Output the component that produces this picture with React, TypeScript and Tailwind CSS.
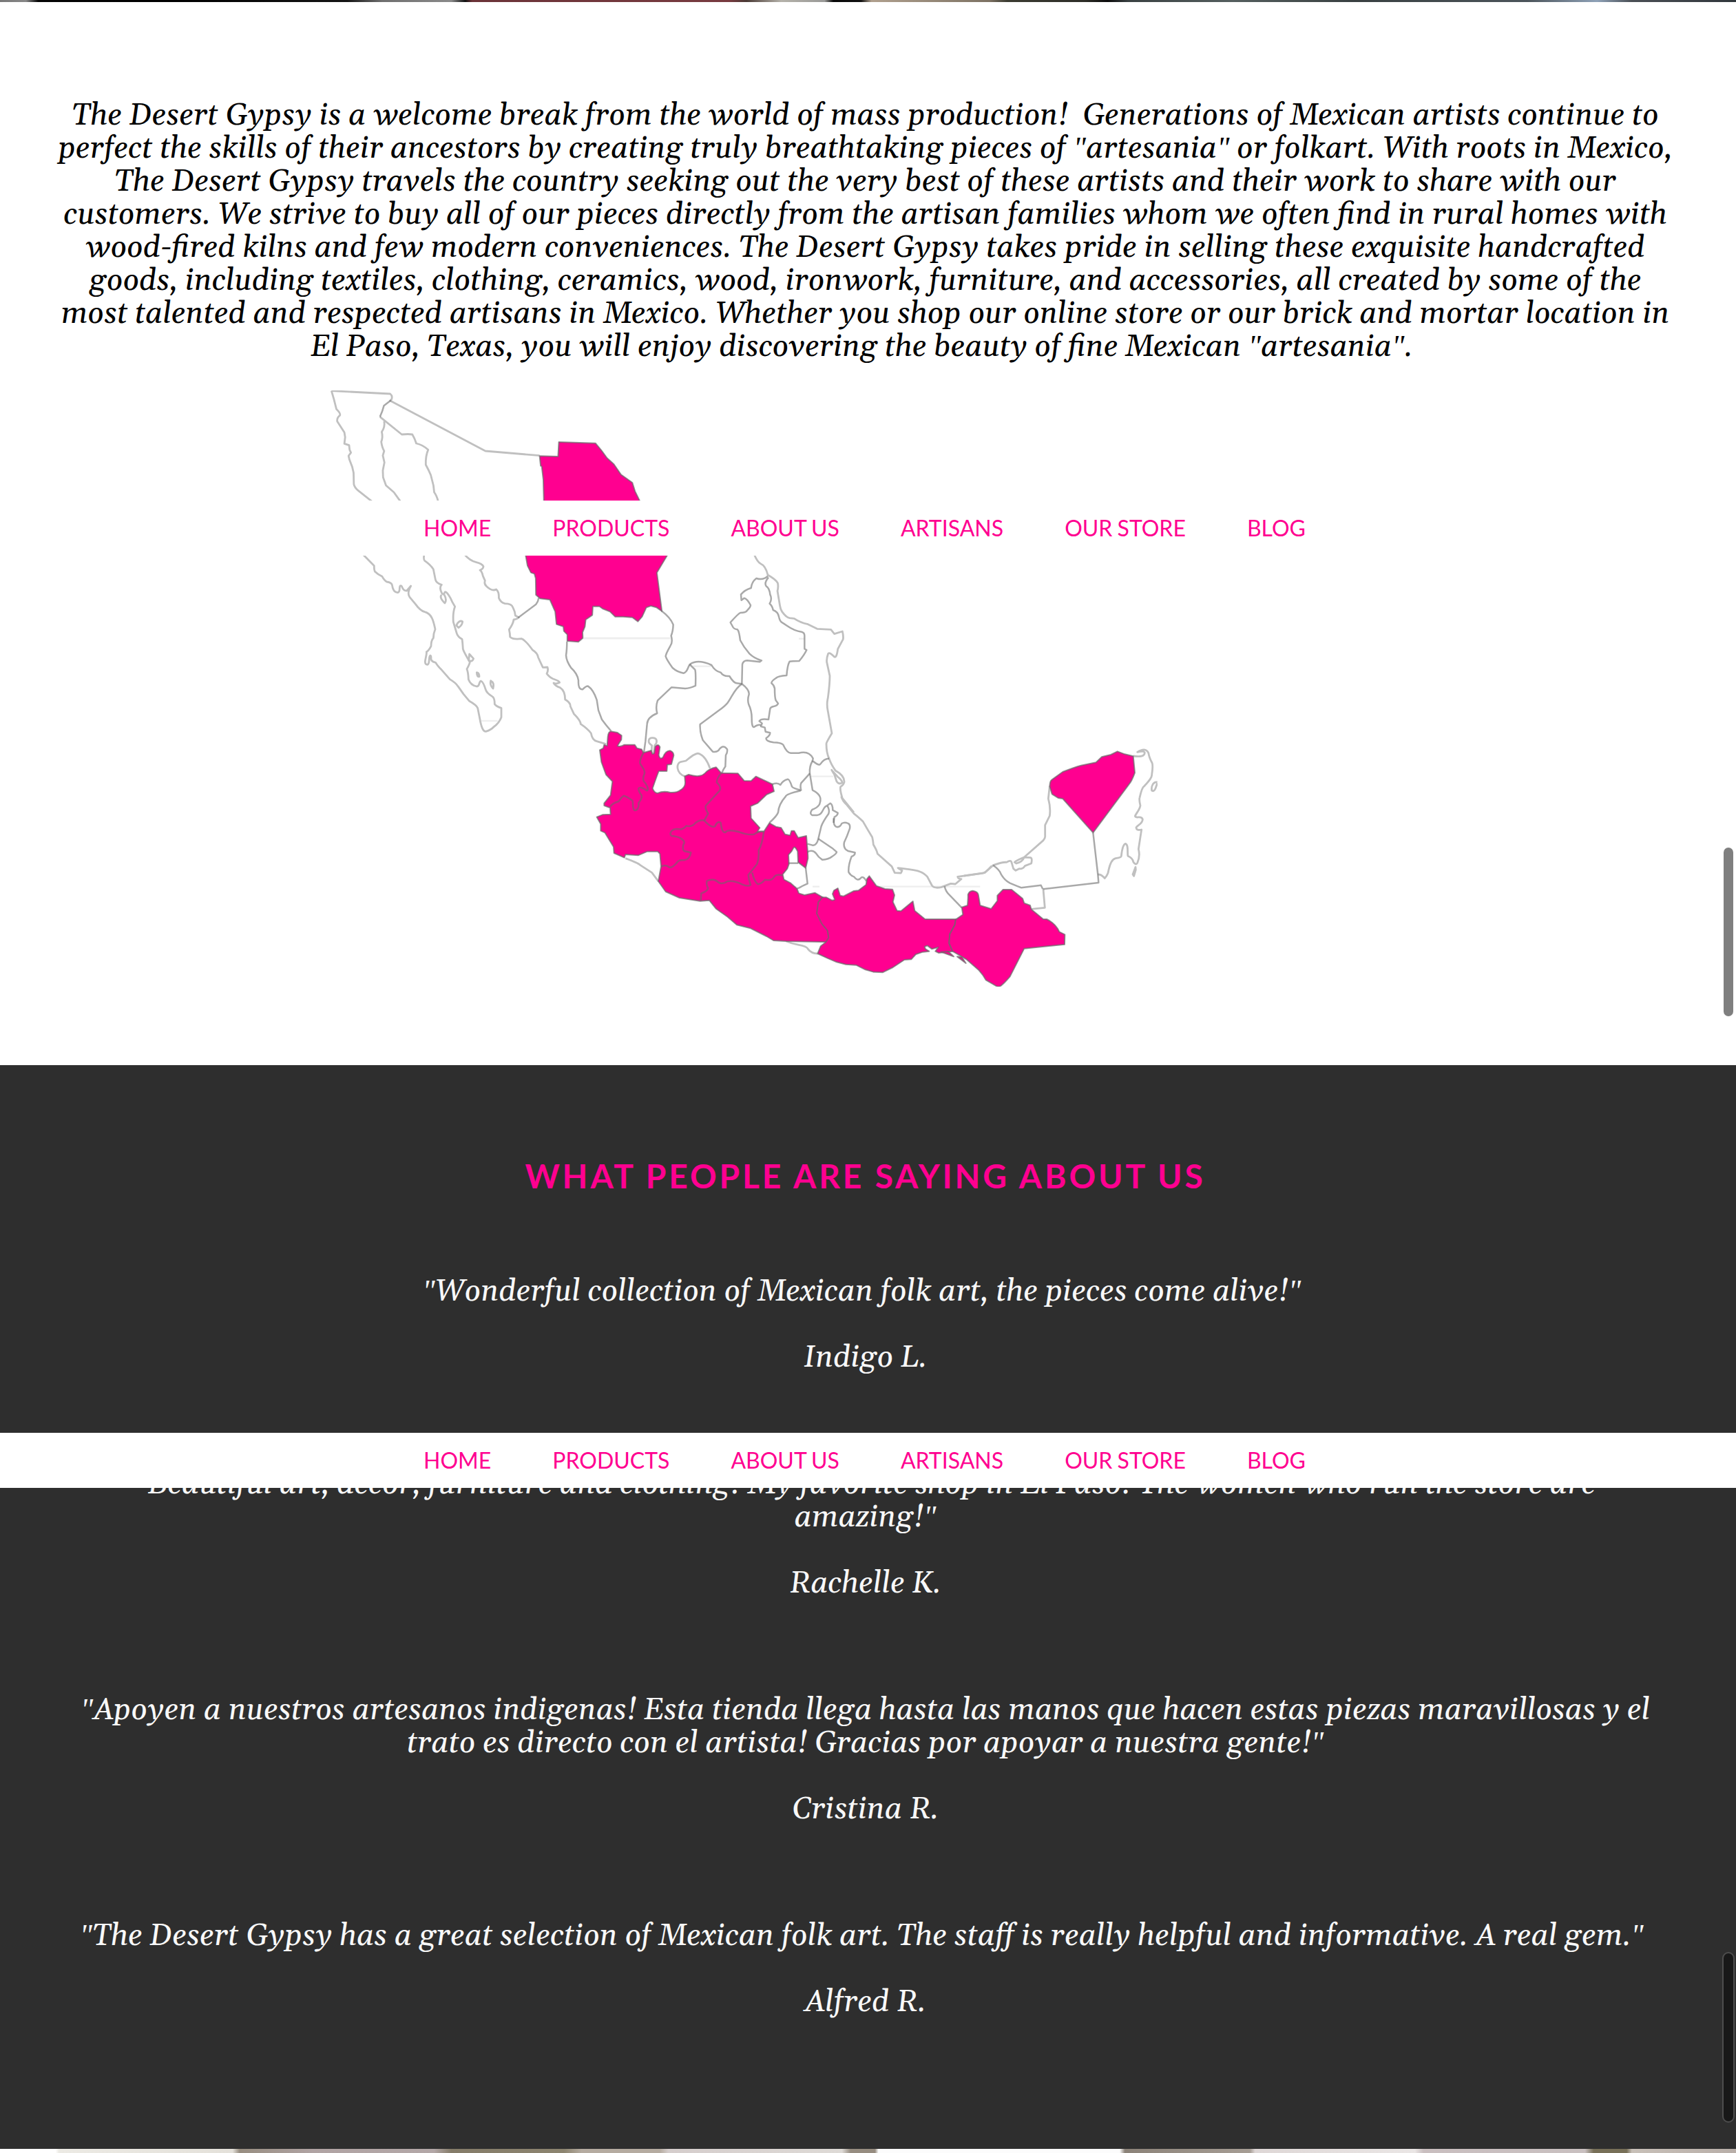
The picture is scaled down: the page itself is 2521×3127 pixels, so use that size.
const aboutLines = [
  "The Desert Gypsy is a welcome break from the world of mass production!\u00a0 Generations of Mexican artists continue to",
  'perfect the skills of their ancestors by creating truly breathtaking pieces of "artesania" or folkart. With roots in Mexico,',
  "The Desert Gypsy travels the country seeking out the very best of these artists and their work to share with our",
  "customers. We strive to buy all of our pieces directly from the artisan families whom we often find in rural homes with",
  "wood-fired kilns and few modern conveniences. The Desert Gypsy takes pride in selling these exquisite handcrafted",
  "goods, including textiles, clothing, ceramics, wood, ironwork, furniture, and accessories, all created by some of the",
  "most talented and respected artisans in Mexico. Whether you shop our online store or our brick and mortar location in",
  'El Paso, Texas, you will enjoy discovering the beauty of fine Mexican "artesania".\u00a0',
];

const quotes = [
  { lines: ['"Wonderful collection of Mexican folk art, the pieces come alive!"\u00a0'], author: "Indigo L." },
  {
    lines: [
      '"Beautiful art, decor, furniture and clothing! My favorite shop in El Paso! The women who run the store are',
      'amazing!"',
    ],
    author: "Rachelle K.",
  },
  {
    lines: [
      '"Apoyen a nuestros artesanos indigenas! Esta tienda llega hasta las manos que hacen estas piezas maravillosas y el',
      'trato es directo con el artista! Gracias por apoyar a nuestra gente!"',
    ],
    author: "Cristina R.",
  },
  {
    lines: [
      '"The Desert Gypsy has a great selection of Mexican folk art. The staff is really helpful and informative. A real gem."\u00a0',
    ],
    author: "Alfred R.",
  },
];

const navItems = ["HOME", "PRODUCTS", "ABOUT US", "ARTISANS", "OUR STORE", "BLOG"];

type Layer = { at: string; fills?: string[]; borders?: string[]; coast?: string[]; faint?: string[] };

/* Each layer covers one part of the country in its own local units. */
const north: Layer = {
  at: "translate(440 540) scale(0.38265 0.33333)",
  fills: [
    "M898 367 L968 369 971 306 1110 311 1133 343 1154 376 1180 403 1207 448 1250 483 1260 520 1277 560 1320 680 1400 760 1382 800 1343 875 1362 1043 1342 1027 1320 1020 1303 1027 1287 1067 1271 1088 1250 1070 1215 1067 1185 1067 1165 1045 1137 1032 1125 1022 1100 1022 1098 1060 1073 1080 1070 1110 1061 1135 1062 1160 1045 1177 1003 1173 1003 1145 990 1130 988 1110 962 1100 957 1045 937 993 900 988 884 972 883 900 878 880 865 875 852 845 845 800 845 700 914 560 912 470 906 412 902 410Z",
  ],
  coast: [
    "M108 83 L331 96 Q341 105 336 120 L331 126 692 345 898 365",
    "M108 83 L117 118 127 163 Q144 182 140 190 Q128 200 130 216 L157 264 160 285 157 313 175 320 177 340 182 352 173 366 176 382 187 415 192 440 193 490 Q196 505 210 518 L262 565",
    "M308 215 Q312 240 299 262 Q304 285 297 305 Q300 330 308 345 L303 365 309 395 303 430 304 460 315 495 345 525 370 565",
    "M292 196 L375 273 Q400 270 415 273 Q424 290 430 312 Q455 318 475 340 Q465 365 466 405 Q478 430 485 450 L495 495 498 525 Q508 540 513 565",
  ],
  borders: ["M334 124 L307 148 Q301 175 292 196"],
  faint: ["M1062 1161 H1393"],
};

const baja: Layer = {
  at: "translate(500 780) scale(0.33333)",
  borders: [
    "M757 352 L835 293 Q845 280 847 265",
    "M970 455 Q970 490 966 515 Q967 540 988 570 Q1016 595 1020 625 Q1018 665 1038 664 Q1055 648 1062 650 Q1085 665 1100 710 L1107 755 1122 795 Q1140 820 1162 845",
  ],
  coast: [
    "M80 74 L130 125 Q129 140 133 150 Q145 162 165 172 Q175 190 185 195 Q205 198 208 208 Q212 240 232 242 C248 240 235 212 246 212 C255 212 250 235 272 234 L290 213 Q272 245 285 262 L310 292 Q330 320 350 326 C385 335 390 375 396 402 Q388 420 388 440 Q378 450 378 475 Q368 495 358 500 C362 515 340 555 362 556 C375 553 365 520 375 516 C385 520 365 540 398 547 Q405 560 425 580 L460 620 Q485 635 495 650 L520 685 545 715 Q575 732 581 745 Q585 765 590 790 Q600 850 617 847 Q640 840 650 828 Q675 810 684 785 L684 745 Q662 738 655 728 Q655 700 645 695 Q620 680 616 665 Q605 630 595 627 C585 630 592 650 577 651 Q550 645 541 620 Q540 590 534 575 Q545 555 547 545 Q520 500 517 488 Q515 455 513 445 Q495 435 490 420 L475 370 Q472 330 482 303 Q470 285 462 265 Q445 235 438 240 Q432 255 425 245 Q412 220 424 208 Q400 200 397 185 L388 140 Q375 120 350 103 Q344 98 348 74",
    "M424 252 Q412 262 438 288 Q448 275 435 250",
    "M488 385 Q500 360 515 368 Q515 382 498 395Z",
    "M545 510 L563 530 Q558 545 542 538Z",
    "M577 590 Q588 592 588 608 Q578 612 577 590Z",
    "M638 626 Q655 635 648 660 Q633 645 638 626Z",
    "M524 76 Q545 102 575 110 Q600 116 606 128 Q605 140 591 144 Q600 150 604 170 L613 190 Q608 205 620 215 Q645 238 662 228 Q675 240 673 265 Q680 285 700 290 Q730 290 735 308 Q744 325 745 342 L760 350 Q752 358 738 360 Q735 380 718 403 Q722 420 722 435 Q735 448 772 443 Q790 450 820 492 Q842 505 845 525 L865 568 885 567 Q890 580 882 595 Q895 612 910 618 Q940 628 938 634 Q922 642 912 636 Q920 650 940 656 Q962 670 962 708 Q985 720 985 738 L1000 770 Q1030 800 1030 815 Q1060 835 1075 855 Q1080 885 1100 890 L1140 902",
  ],
  faint: ["M597 801 H668"],
};

const northeast: Layer = {
  at: "translate(840 780) scale(0.33333)",
  borders: [
    "M362 322 Q400 350 413 382 Q412 410 404 430 Q412 460 400 475 Q380 510 380 520 Q385 535 410 570 Q430 588 458 593 C475 590 475 570 485 555 Q520 530 580 558 Q595 585 620 590 Q630 608 658 606 Q675 635 690 637 L712 640",
    "M485 555 L508 578 Q512 590 510 648 Q485 660 465 660 L405 655 345 712 Q335 740 343 768 Q300 785 299 815 L292 890 285 940",
    "M712 640 C680 660 670 695 650 722 Q640 735 610 757 L530 816 Q528 850 542 885 L585 935 Q600 938 610 930 Q630 900 648 925 Q650 940 642 950 L640 1000 Q632 1010 624 1030",
    "M712 640 L714 555 Q718 538 735 538 L790 544 798 538 Q765 528 745 508 Q720 480 705 450 Q700 410 693 403 Q675 400 672 390 L662 372 Q695 335 705 330 Q730 330 735 320 Q750 305 750 297 Q735 268 722 266 L710 275 708 250 Q725 230 752 222 Q755 195 775 180 Q805 190 825 170",
    "M828 176 Q808 200 818 214 Q832 222 835 250 Q845 270 833 290 Q845 300 848 318 Q870 325 874 350 Q878 368 888 373 C910 385 930 408 972 413 Q985 416 985 430 L985 487 994 492 Q985 512 962 540 Q930 540 920 542 Q910 560 907 603 Q870 605 860 615 Q840 628 841 637 Q852 645 855 660 Q855 700 860 712 L870 725 Q866 736 850 738 Q838 740 835 748 L828 795 Q795 790 788 802 L800 812 795 825 812 830 815 848 835 853 Q835 865 818 876 Q815 890 850 895 Q880 895 892 905 Q908 940 925 941 L960 941 Q1005 930 1022 965 L1020 975 Q1050 1000 1055 988 Q1070 965 1092 965",
    "M712 640 Q745 665 743 685 Q735 710 742 730 Q755 755 755 790 Q755 830 765 828 Q785 815 795 820",
    "M1020 975 Q1005 1000 1008 1030 L1020 1103 C1065 1125 1055 1150 1050 1165 Q1040 1180 1018 1188 Q1005 1205 1018 1212 L1040 1212 C1065 1212 1065 1175 1080 1172 L1097 1160 Q1108 1165 1108 1190 L1130 1202 Q1130 1212 1115 1220 L1112 1245",
    "M1008 1030 L970 1072 Q965 1085 970 1103 Q935 1095 930 1087 Q920 1055 912 1055 Q890 1060 880 1080 Q868 1068 845 1077",
    "M968 1105 Q905 1120 903 1130 Q872 1165 870 1200 Q865 1215 832 1245",
  ],
  coast: [
    "M765 74 Q780 110 795 117 Q815 125 825 165 Q860 185 868 200 Q872 215 867 235 L878 300 Q880 315 887 325 Q905 350 920 353 L940 355 Q965 372 1000 380 L1040 400 1100 403 1115 422 1150 411 Q1155 430 1153 445 L1130 488 Q1125 528 1115 522 Q1095 500 1088 508 Q1080 530 1082 545 L1095 605 Q1095 640 1087 700 Q1080 730 1087 760 L1104 855 Q1080 895 1080 900 Q1080 940 1092 965 Q1100 990 1120 1018 Q1160 1040 1158 1068 Q1155 1080 1142 1088 Q1138 1100 1150 1138 L1200 1200",
    "M318 942 L320 908 C298 895 305 875 322 875 C345 875 345 895 332 908 L328 944",
    "M463 1042 C425 1030 425 985 445 980 L468 975 Q510 940 522 943 C550 950 565 985 573 1007",
    "M1103 1015 L1115 1035 1125 1065 Q1135 1080 1150 1070 Q1145 1055 1130 1045Z",
  ],
  faint: ["M500 563 H580", "M22 441 H400", "M960 443 H985", "M1012 1043 H1110"],
};

const west: Layer = {
  at: "translate(840 1040) scale(0.33333)",
  fills: [
    "M125 130 L128 90 Q130 68 142 67 L170 72 188 85 187 103 170 130 Q185 135 200 125 L245 125 255 140 275 145 283 160 317 150 322 165 330 163 335 133 Q348 118 355 135 L350 170 Q355 192 368 180 Q380 150 400 151 Q415 157 415 172 L405 210 387 212 385 240 350 240 Q340 265 323 315 Q330 335 345 336 Q370 325 400 333 Q430 335 445 322 Q465 310 465 290 L463 262 480 255 Q530 270 550 250 Q570 228 600 223 L622 248 695 250 722 282 752 283 773 263 845 297 852 328 820 342 780 380 750 393 752 445 790 487 780 503 808 503 832 466 860 482 883 487 900 515 922 520 928 500 940 500 957 530 993 522 996 560 Q1000 600 1000 620 L990 662 957 637 955 590 Q945 568 938 572 L928 590 915 605 917 645 910 665 890 690 895 712 925 728 952 752 960 772 985 780 1030 770 1065 790 1095 985 905 981 850 978 820 960 750 925 690 910 650 875 600 840 570 803 530 806 440 792 380 765 348 720 360 655 355 600 345 590 300 590 260 607 205 603 200 617 155 597 153 570 115 508 97 500 97 470 80 440 105 430 140 428 138 400 112 390 112 380 140 345 148 285 120 255 100 200 93 148 108 140 112 125Z",
  ],
  borders: [
    "M283 160 Q262 200 270 210 Q290 235 288 250 Q275 280 290 290 Q310 320 298 325 Q270 305 262 315 Q262 330 275 345 Q278 360 262 378 C265 400 255 412 245 411 C232 405 240 375 235 368 Q210 350 197 347 Q185 355 175 372 Q150 378 138 395",
    "M622 248 Q600 275 603 290 Q625 310 615 325 L555 390 Q550 400 565 425 L548 455",
    "M548 455 Q530 450 510 465 Q495 485 470 478 Q455 495 440 493 C405 488 395 510 405 522 Q430 525 440 530 Q470 545 457 560 Q450 590 470 590 L490 595 Q485 625 460 628 Q435 625 428 640 Q405 665 395 658 Q375 645 360 657",
    "M548 455 Q580 490 595 480 Q605 455 620 465 Q625 510 640 507 Q650 492 700 505 Q740 520 765 515 Q785 500 808 503",
    "M808 503 Q800 560 785 585 Q788 620 778 645 L740 692 Q742 715 750 735 Q740 745 712 733 Q680 715 650 720 Q625 735 610 725 Q590 705 560 718 Q555 735 565 750 Q560 765 535 772 L533 805",
    "M757 682 Q765 720 782 733 Q800 728 812 713 Q840 718 850 705 Q860 685 888 695",
    "M915 641 H957",
    "M990 662 L998 730 Q975 740 962 748 L952 752",
  ],
  coast: ["M205 620 Q260 640 270 650 L320 682 348 720", "M905 981 Q930 992 960 997 Q995 1003 1000 1015 Q1015 1035 1042 1035"],
  faint: ["M225 143 H265", "M715 623 H808", "M907 744 H950"],
};

const oaxaca: Layer = {
  at: "translate(1140 1080) scale(0.33333)",
  fills: [
    "M150 685 L162 670 180 670 205 683 217 680 207 655 213 640 230 630 240 662 255 665 300 642 320 640 353 615 357 590 367 577 398 620 435 633 468 635 477 660 470 690 488 728 505 730 557 687 565 728 610 765 745 765 740 790 718 830 715 870 730 905 670 912 655 905 668 887 640 895 620 880 608 885 612 895 628 905 600 908 570 918 550 940 520 942 470 975 425 997 385 995 350 985 310 965 265 962 225 952 185 935 142 915 155 883 178 865 190 845 185 815 160 785 138 740 145 690Z",
    "M680 908 L712 906 735 928Z M750 928 L770 930 788 957Z",
  ],
  borders: [
    "M212 325 Q210 355 222 362 Q238 368 247 348 Q260 340 275 348 Q285 352 282 370 Q270 405 258 430 Q252 458 275 468 L305 475 Q305 488 290 492 Q275 530 277 560 Q285 575 300 580 Q315 600 328 588 Q340 572 355 600",
    "M185 272 Q195 290 190 305 Q165 340 158 360 L145 415 Q138 445 120 443 L98 437",
    "M145 415 Q190 445 205 455 L225 472 Q225 480 205 492 Q190 505 162 506 Q145 495 135 478 Q120 460 98 472",
    "M695 622 Q700 645 715 658 L770 715",
  ],
  coast: [
    "M245 230 Q250 250 270 268 L300 305 Q325 325 340 340 Q360 375 380 408 Q383 420 385 440 Q400 465 403 480 L465 535 478 563 505 564 510 553 Q500 548 492 542 Q520 545 560 551 Q600 557 620 580 L640 618 Q650 632 680 626 L722 610 742 612 768 590 Q755 590 752 580 L860 565 Q872 565 900 533",
  ],
  faint: ["M390 623 H850", "M120 623 H150"],
};

const yucatan: Layer = {
  at: "translate(1400 1070) scale(0.33333)",
  fills: [
    "M373 215 Q375 190 383 187 L430 153 Q475 135 510 125 L575 112 600 88 640 78 668 64 700 76 737 85 744 157 Q730 195 718 208 L562 418 430 270 410 267 383 250Z",
    "M-10 743 L15 735 Q18 700 17 688 Q22 672 38 671 Q60 675 62 688 L70 735 118 750 145 715 145 692 170 666 207 666 255 705 262 725 288 735 293 752 345 795 360 795 Q400 815 415 850 L439 862 438 905 262 923 200 1045 Q170 1080 155 1089 L145 1089 95 1060 Q85 1040 65 1018 L10 970 -15 955 -50 935 -65 900 -62 860 -40 820 -37 797 -5 775Z",
  ],
  borders: [
    "M127 560 Q155 580 160 597 Q175 625 200 638 Q240 655 250 658 L335 647 343 664",
    "M562 418 L583 600 586 636 345 664",
  ],
  coast: [
    "M0 606 L90 593 127 560 Q170 545 185 547 Q205 535 207 548 L215 575 225 583 240 575 Q255 578 265 563 L293 552 Q298 530 290 527 L262 525 Q225 540 220 547 L228 552 Q255 545 262 525 L345 452 Q355 440 353 430 L353 385 373 345 Q378 310 367 270 L373 215",
    "M345 664 L352 745 293 751",
    "M583 600 Q600 600 613 617 Q628 600 630 580 Q640 535 660 530 Q685 527 685 520 Q690 470 703 466 C718 470 710 510 714 520 Q735 530 737 545 Q748 562 755 550 Q768 520 760 490 L773 405 Q750 410 750 395 C755 385 778 380 778 360 C772 340 750 360 745 346 C748 335 765 320 768 300 Q762 275 765 265 Q775 220 785 215 Q820 180 818 165 Q825 120 817 110 Q808 95 803 70 Q790 45 755 67 Q785 60 787 70 Q785 92 737 84",
    "M747 568 L735 600 740 607 748 580Z",
    "M842 198 Q830 195 822 208 Q815 220 818 235 Q828 240 834 225 L842 202",
  ],
  faint: ["M-62 893 H-5"],
};

function MexicoMap() {
  const layers = [north, baja, northeast, west, oaxaca, yucatan];
  return (
    <svg viewBox="475 567 1206 866" className="h-[866px] w-[1206px]" role="img" aria-label="Map of Mexico">
      {layers.map((layer) => (
        <g key={layer.at} transform={layer.at} fill="none" strokeLinejoin="round">
          {layer.faint?.map((d) => (
            <path key={d} d={d} stroke="#eeeeee" strokeWidth={2.4} vectorEffect="non-scaling-stroke" />
          ))}
          {layer.coast?.map((d) => (
            <path key={d} d={d} stroke="#c0c0c0" strokeWidth={2.8} vectorEffect="non-scaling-stroke" />
          ))}
          {layer.fills?.map((d) => (
            <path key={d} d={d} fill="#ff0090" stroke="#6a6a6a" strokeOpacity={0.7} strokeWidth={2} vectorEffect="non-scaling-stroke" />
          ))}
          {layer.borders?.map((d) => (
            <path key={d} d={d} stroke="#6a6a6a" strokeOpacity={0.58} strokeWidth={2.5} vectorEffect="non-scaling-stroke" />
          ))}
        </g>
      ))}
    </svg>
  );
}

function NavBar({ className }: { className: string }) {
  return (
    <nav
      className={`absolute inset-x-0 flex h-20 items-center justify-center gap-[89px] bg-white pr-[10px] font-['Lato',sans-serif] text-[32px] leading-none text-[#ff0090] [word-spacing:-1px] ${className}`}
    >
      {navItems.map((item) => (
        <a key={item} className="whitespace-nowrap">
          {item}
        </a>
      ))}
    </nav>
  );
}

/* Straight double quotes are set in a serif whose marks have no flare. */
function Line({ text }: { text: string }) {
  return (
    <span className="block h-12 whitespace-nowrap">
      {text.split(/(")/).map((part, i) =>
        part === '"' ? (
          <span key={i} className="font-['Liberation_Serif',serif] leading-none">
            {part}
          </span>
        ) : (
          part
        ),
      )}
    </span>
  );
}

function Lines({ lines }: { lines: string[] }) {
  return (
    <p>
      {lines.map((line) => (
        <Line key={line} text={line} />
      ))}
    </p>
  );
}

export default function App() {
  return (
    <div className="flex h-[3127px] w-full flex-col overflow-hidden bg-white font-['Georgia','Gelasio',serif]">
      <section className="relative flex h-[1547px] flex-col">
        <div className="h-[3px] bg-[linear-gradient(90deg,#777_0%,#888_1.5%,#050505_2.2%,#000_10%,#151515_20%,#6f6f6f_22%,#8a8a8a_26%,#111_26.8%,#6b3338_27.2%,#783b40_42%,#4a3a35_43%,#b5b2aa_45%,#9a9a98_47.5%,#080808_48%,#111_49.6%,#b0a08e_50.2%,#7d7263_57%,#3c3c32_58%,#2e2e28_62.5%,#0c0c0c_63.8%,#3a4142_65%,#555f5f_71%,#394041_78%,#4c555b_88%,#8fa2b8_92%,#4a4f55_94%,#30363b_100%)]" />
        <div className="flex flex-col items-center pt-[141px] pr-2 text-center text-[44px] leading-[48px] text-black italic">
          <Lines lines={aboutLines} />
        </div>
        <div className="mt-[39px] ml-[475px]">
          <MexicoMap />
        </div>
        <NavBar className="top-[727px]" />
        <div className="absolute top-[1231px] right-[4px] h-[245px] w-[14px] rounded-full bg-[#7f7f7f]" />
      </section>

      <section className="relative flex h-[1574px] flex-col items-center bg-[#2e2e2e] pt-[137px] pr-2 text-center text-[#f8f8f8]">
        <h2 className="font-['Lato',sans-serif] text-[48px] leading-[48px] font-bold tracking-[3.8px] whitespace-nowrap text-[#ff0090]">
          WHAT PEOPLE ARE SAYING ABOUT US
        </h2>
        <div className="mt-[120px] flex flex-col gap-[136px] text-[44px] leading-[48px] italic">
          {quotes.map((quote) => (
            <blockquote key={quote.author} className="flex flex-col items-center gap-12">
              <Lines lines={quote.lines} />
              <cite>{quote.author}</cite>
            </blockquote>
          ))}
        </div>
        <NavBar className="top-[534px]" />
        <div className="absolute top-[1288px] right-[2px] h-[248px] w-[18px] rounded-full border-2 border-[#4d4d4d] bg-[#181818]" />
      </section>

      <div className="h-[6px] bg-[linear-gradient(90deg,#fff_0%,#fff_3.2%,#eceae4_3.4%,#e4e1da_13.4%,#978d80_13.8%,#b0a3a3_18%,#b3a7a7_25%,#847b68_26%,#8c846f_32.5%,#b5aba0_33.5%,#b5aba0_38%,#d5cdcc_38.5%,#dedad6_48.5%,#968c80_49%,#968c80_50.4%,#fcfcfc_50.6%,#fcfcfc_64.5%,#8b8278_64.8%,#a69d94_72%,#ded7d6_72.3%,#eae6e5_81.5%,#c9bebf_82%,#c9c0c0_91.3%,#776f57_91.8%,#776f57_93.7%,#c8c0b8_94%,#b8aea8_100%)]" />
    </div>
  );
}
